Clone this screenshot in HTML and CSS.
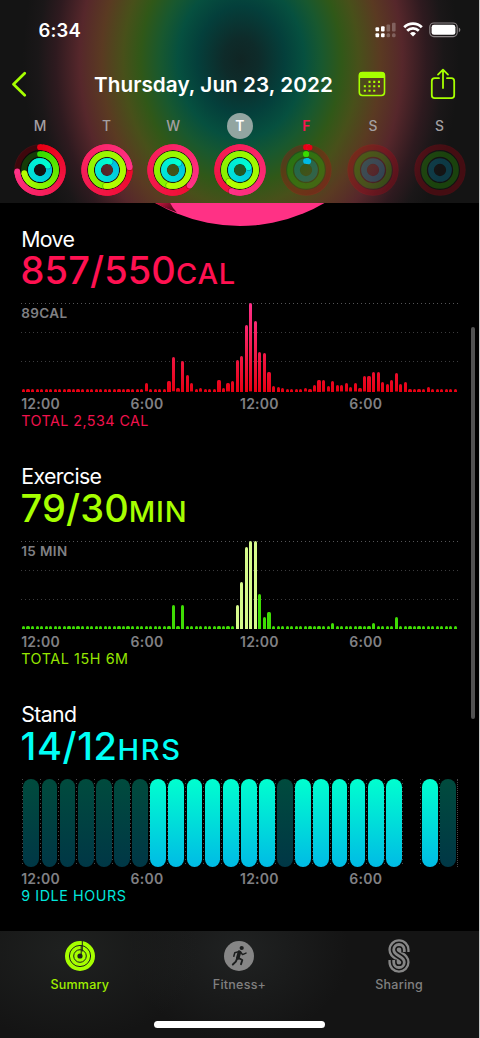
FILE: index.html
```html
<!DOCTYPE html>
<html lang="en">
<head>
    <meta charset="UTF-8">
    <meta name="viewport" content="width=device-width, initial-scale=1.0">
    <title>Activity</title>
    <link rel="stylesheet" href="styles.css">
</head>
<body>
    <div class="phone">
        <header class="header">
            <div class="status-bar">
                <span class="time">6:34</span>
                <svg class="signal" width="22" height="16" viewBox="0 0 22 16" fill="#fff">
                    <rect x="0.5" y="5.3" width="3.6" height="4" rx="1"/>
                    <rect x="6" y="4.2" width="3.6" height="5.2" rx="1"/>
                    <rect x="11.5" y="2.5" width="3.6" height="7" rx="1" opacity=".25"/>
                    <rect x="17" y="0.7" width="3.6" height="8.8" rx="1" opacity=".25"/>
                    <rect x="0.5" y="11.3" width="3.6" height="4" rx="1"/>
                    <rect x="6" y="11.3" width="3.6" height="4" rx="1"/>
                    <rect x="11.5" y="11.3" width="3.6" height="4" rx="1.5" opacity=".25"/>
                    <rect x="17" y="11.3" width="3.6" height="4" rx="1.5" opacity=".25"/>
                </svg>
                <svg class="wifi" width="20" height="15" viewBox="0 0 20 15" fill="none" stroke="#fff" stroke-width="2.8">
                    <path d="M1.2 5.2a12.6 12.6 0 0 1 17.6 0"/>
                    <path d="M4.2 8.8a8.2 8.2 0 0 1 11.6 0"/>
                    <path d="M10 14.6l-3-3.1a4.3 4.3 0 0 1 6 0z" fill="#fff" stroke="none"/>
                </svg>
                <svg class="battery" width="32" height="16" viewBox="0 0 32 16">
                    <rect x="0.8" y="1" width="27.4" height="13.6" rx="4" fill="none" stroke="#8c8587" stroke-width="1.1"/>
                    <rect x="2.6" y="2.8" width="23.8" height="10" rx="2.4" fill="#fff"/>
                    <path d="M29.8 5.4q1.6.8 1.6 2.4t-1.6 2.4z" fill="#8c8587"/>
                </svg>
            </div>
            <div class="nav-bar">
                <svg class="back" width="16" height="26" viewBox="0 0 16 26" fill="none" stroke="#a6ff00" stroke-width="2.7" stroke-linecap="round" stroke-linejoin="round">
                    <path d="M13.7 2.3L2.5 13.3l11.2 11"/>
                </svg>
                <h1 class="title">Thursday, Jun 23, 2022</h1>
                <svg class="calendar" width="28" height="26" viewBox="0 0 28 26" fill="#a6ff00">
                    <rect x="1.3" y="1.5" width="25.2" height="23" rx="3.2" fill="none" stroke="#a6ff00" stroke-width="1.6"/>
                    <path d="M1 7V4.2Q1 1 4.2 1h19.4Q26.8 1 26.8 4.2V7z"/>
                    <g fill="none" stroke="#a6ff00" stroke-width="2.1" stroke-dasharray="2.1 2.6">
                        <path d="M10.5 10.9h11.6"/>
                        <path d="M5.8 15.3h16.3"/>
                        <path d="M5.800 19.700h11.500"/>
                    </g>
                </svg>
                <svg class="share" width="26" height="32" viewBox="0 0 26 32" fill="none" stroke="#a6ff00" stroke-width="1.8" stroke-linecap="round" stroke-linejoin="round">
                    <path d="M9 10.2H4.7Q1.8 10.2 1.8 13.1V27.3Q1.8 30.2 4.7 30.2H21.3Q24.2 30.2 24.2 27.3V13.1Q24.2 10.2 21.3 10.2H17"/>
                    <path d="M13 20V1.7M8 6.6l5-5 5 5"/>
                </svg>
            </div>
            <div class="week" id="week"></div>
        </header>

        <svg class="big-ring" width="479" height="25" viewBox="0 202.5 479 25">
            <defs>
                <linearGradient id="ring-tail" x1="0" x2="1" y1="0" y2="0.5">
                    <stop offset="0" stop-color="#dc1844"/>
                    <stop offset="1" stop-color="#4d0719"/>
                </linearGradient>
            </defs>
            <circle cx="240" cy="59" r="166.5" fill="#ff3185"/>
            <path d="M154 202h16q2 5 7 10-12-4-23-10z" fill="url(#ring-tail)"/>
        </svg>

        <main class="content">
            <section class="metric move">
                <h2>Move</h2>
                <div class="value">857/550<span>CAL</span></div>
                <div class="chart">
                    <div class="scale">89CAL</div>
                    <div class="bars" id="move-bars"></div>
                </div>
                <div class="axis"><span>12:00</span><span>6:00</span><span>12:00</span><span>6:00</span></div>
                <div class="total">TOTAL 2,534 CAL</div>
            </section>

            <section class="metric exercise">
                <h2>Exercise</h2>
                <div class="value">79/30<span>MIN</span></div>
                <div class="chart">
                    <div class="scale">15 MIN</div>
                    <div class="bars" id="exercise-bars"></div>
                </div>
                <div class="axis"><span>12:00</span><span>6:00</span><span>12:00</span><span>6:00</span></div>
                <div class="total">TOTAL 15H 6M</div>
            </section>

            <section class="metric stand">
                <h2>Stand</h2>
                <div class="value">14/12<span>HRS</span></div>
                <div class="hours" id="stand-hours"></div>
                <div class="axis"><span>12:00</span><span>6:00</span><span>12:00</span><span>6:00</span></div>
                <div class="total">9 IDLE HOURS</div>
            </section>
        </main>

        <div class="scrollbar"></div>

        <footer class="tab-bar">
            <div class="tabs">
                <div class="tab active">
                    <svg width="34" height="34" viewBox="-17 -17 34 34" fill="none">
                        <circle r="8.8" stroke="#a6ff00" stroke-width="12.4"/>
                        <circle r="10.6" stroke="#1c1e1d" stroke-width="1"/>
                        <circle r="6.3" stroke="#1c1e1d" stroke-width="1"/>
                        <path d="M2.3-15V-4.5M1.2-11V-1" stroke="#1c1e1d" stroke-width="1"/>
                    </svg>
                    <span>Summary</span>
                </div>
                <div class="tab">
                    <svg width="34" height="34" viewBox="-17 -17 34 34" fill="none" stroke="#1c1e1e" stroke-linecap="round" stroke-linejoin="round">
                        <circle r="15" fill="#868686" stroke="none"/>
                        <circle cx="2.7" cy="-8" r="2.1" fill="#1c1e1e" stroke="none"/>
                        <path d="M.4-3.8L-1.2 2" stroke-width="3.6"/>
                        <path d="M-.4-4.4L-4.2-3.2-5.2.2M1.4-4.2L3.5-1.4 7-2.9" stroke-width="1.5"/>
                        <path d="M-.8 1.8L3.3 4 2 8.2M-1.7 2.2L-3.2 5.6-6.2 8.5" stroke-width="1.9"/>
                    </svg>
                    <span>Fitness+</span>
                </div>
                <div class="tab">
                    <svg width="22" height="34" viewBox="0 0 22 34" fill="none">
                        <path class="s-outer" d="M16.3 13V10.8A5.3 5.3 0 0 0 5.7 10.8C5.7 17.5 16.3 16.5 16.3 23.2A5.3 5.3 0 0 1 5.7 23.2V21"/>
                        <path class="s-gap" d="M16.3 13.5V10.8A5.3 5.3 0 0 0 5.7 10.8C5.7 17.5 16.3 16.5 16.3 23.2A5.3 5.3 0 0 1 5.7 23.2V20.5"/>
                        <path class="s-inner" d="M16.3 13V10.8A5.3 5.3 0 0 0 5.7 10.8C5.7 17.5 16.3 16.5 16.3 23.2A5.3 5.3 0 0 1 5.7 23.2V21"/>
                    </svg>
                    <span>Sharing</span>
                </div>
            </div>
            <div class="home-indicator"></div>
        </footer>
    </div>
    <script src="script.js"></script>
</body>
</html>
```
FILE: styles.css
```css
* {
    box-sizing: border-box;
}
body {
    margin: 0;
    background: #c9c9c9;
    font-family: Inter, "Liberation Sans", sans-serif;
    color: #fff;
}
.phone {
    position: relative;
    display: flex;
    flex-direction: column;
    width: 479px;
    height: 1038px;
    background: #000;
    overflow: hidden;
}

/* header */
.header {
    flex: none;
    height: 202.5px;
    background: radial-gradient(ellipse 218px 270px at 241px 60px,
        #102524 0%, #0e2b2a 8%, #043f3b 20%, #06503f 29%, #18582f 37%,
        #305818 46%, #48501a 54%, #5a3a22 64%, #56272b 74%, #2e1a1f 85%, #1a1718 93%, #141414 100%);
}
.status-bar {
    display: flex;
    align-items: center;
    height: 59px;
    padding-left: 38.5px;
}
.time {
    width: 336.5px;
    font-size: 18.5px;
    font-weight: 600;
    letter-spacing: 0.15px;
}
.signal {
    width: 22px;
}
.wifi {
    margin-left: 6px;
}
.battery {
    margin-left: 6px;
}
.nav-bar {
    display: flex;
    align-items: center;
    height: 50px;
    padding-left: 10.5px;
}
.title {
    width: 256px;
    margin: 0 0 0 67.5px;
    font-size: 20.7px;
    font-weight: 600;
    letter-spacing: 0.06px;
    white-space: nowrap;
}
.calendar {
    margin-left: 8px;
}
.share {
    margin-left: 44px;
}
.week {
    display: grid;
    grid-template-columns: repeat(7, 66.6px);
    padding: 4.3px 0 0 6.7px;
}
.day {
    display: flex;
    flex-direction: column;
    align-items: center;
}
.letter {
    width: 26px;
    height: 26px;
    border-radius: 50%;
    line-height: 26px;
    text-align: center;
    font-size: 13.8px;
    font-weight: 500;
    color: #a39fa1;
}
.selected .letter {
    background: #92a5a1;
    color: #fff;
    font-weight: 600;
}
.today .letter {
    color: #fa1450;
    font-weight: 600;
}
.rings {
    margin-top: 4px;
}

.big-ring {
    flex: none;
    display: block;
}

/* metrics */
.content {
    flex: none;
    display: flex;
    flex-direction: column;
    gap: 35.3px;
    height: 703.5px;
    padding: 0.3px 0 0 21.2px;
}
.metric h2 {
    margin: 0;
    height: 22.4px;
    line-height: 22.4px;
    font-size: 21.3px;
    font-weight: 400;
    letter-spacing: -0.6px;
}
.value {
    height: 40px;
    line-height: 40px;
    margin: 0 0 13.2px -0.6px;
    font-size: 38px;
    font-weight: 500;
    letter-spacing: 0.1px;
    color: #ff1151;
    white-space: nowrap;
}
.value span {
    font-size: 29px;
    letter-spacing: 0.8px;
}
.chart {
    position: relative;
    width: 436.8px;
    height: 88.4px;
    background:
        repeating-linear-gradient(90deg, transparent 0 1.5px, #000 1.5px 4px) 0 0 / 100% 100%,
        linear-gradient(#555557, #555557) 0 0 / 100% 1px no-repeat,
        linear-gradient(#3c3c3e, #3c3c3e) 0 29px / 100% 1px no-repeat,
        linear-gradient(#3c3c3e, #3c3c3e) 0 58px / 100% 1px no-repeat;
}
.scale {
    position: absolute;
    top: 1.5px;
    left: 0;
    font-size: 13.5px;
    line-height: 17px;
    font-weight: 600;
    letter-spacing: 0.4px;
    color: #808084;
}
.bars {
    display: flex;
    align-items: flex-end;
    height: 100%;
}
.bar {
    flex: 1;
    height: 3px;
    margin: 0 0.7px;
    border-radius: 1.5px 1.5px 0 0;
}
.move .bar {
    background: linear-gradient(#ff308a, #f01a4a 55%, #e80012) 0 100% / 100% 88.4px no-repeat;
}
.exercise .bar {
    background: #3fdd04;
}
.exercise .bar.workout {
    background: #d6fa8c;
}
.hours {
    display: grid;
    grid-template-columns: repeat(24, 18.14px);
    width: 436.8px;
    height: 88.4px;
    padding-left: 0.5px;
}
.hour {
    height: 100%;
    padding: 0 0.7px 0 1.7px;
    background: repeating-linear-gradient(#4a4a4c 0 1.5px, transparent 1.5px 4px) 0 0 / 1.2px 100% no-repeat;
}
.hour:last-child {
    width: 19.2px;
    border-right: 1px dotted #4a4a4c;
}
.pill {
    height: 100%;
    border-radius: 8px;
}
.stood {
    background: linear-gradient(#00ffcf, #00bbe5);
}
.idle {
    background: linear-gradient(#004b3d, #003746);
}
.axis {
    display: grid;
    grid-template-columns: repeat(4, 109.4px);
    height: 17px;
    margin-top: 3.4px;
    line-height: 17px;
    font-size: 14px;
    font-weight: 600;
    letter-spacing: 0.25px;
    color: #808084;
}
.total {
    height: 18px;
    line-height: 18px;
    font-size: 14.3px;
    letter-spacing: 0.46px;
    color: #f0124d;
}
.exercise .value {
    color: #a6ff00;
}
.exercise .total {
    color: #96e600;
    letter-spacing: 0.6px;
}
.stand .value {
    color: #00fff6;
    letter-spacing: 0.6px;
}
.stand .total {
    color: #00e6dc;
    letter-spacing: 0.58px;
}
.stand .value span {
    letter-spacing: 1.6px;
}

.scrollbar {
    position: absolute;
    top: 327px;
    left: 471.3px;
    width: 4px;
    height: 391.5px;
    border-radius: 2px;
    background: #525252;
}

/* tab bar */
.tab-bar {
    flex: none;
    height: 107px;
    padding-top: 7.5px;
    background:
        radial-gradient(ellipse 130px 90px at 70px 20px, #1f2120, transparent),
        radial-gradient(ellipse 110px 90px at 239px 20px, #202222, transparent),
        #141414;
}
.tabs {
    display: grid;
    grid-template-columns: repeat(3, 1fr);
}
.tab {
    display: flex;
    flex-direction: column;
    align-items: center;
    font-size: 12.5px;
    font-weight: 500;
    letter-spacing: 0.25px;
    color: #808080;
}
.tab span {
    margin-top: 4.5px;
    line-height: 16px;
}
.tab.active {
    color: #a0f000;
}
.s-outer {
    stroke: #868686;
    stroke-width: 10.6;
}
.s-gap {
    stroke: #161616;
    stroke-width: 6;
}
.s-inner {
    stroke: #868686;
    stroke-width: 2.8;
}
.home-indicator {
    width: 171px;
    height: 6.6px;
    margin: 28px auto 0;
    border-radius: 4px;
    background: #fff;
}
```
FILE: script.js
```javascript
const MOVE = { start: [232, 0, 20], end: [255, 50, 135] };
const EXERCISE = { start: [56, 220, 0], end: [182, 255, 0] };
const STAND = { start: [0, 186, 228], end: [0, 255, 208] };

// progress of each ring, 1 = one full lap
const days = [
    { letter: 'M', move: 0.74, exercise: 0.72, stand: 1.17 },
    { letter: 'T', move: 1.23, exercise: 2.51, stand: 1.05 },
    { letter: 'W', move: 1.37, exercise: 2.54, stand: 1.11 },
    { letter: 'T', move: 1.56, exercise: 2.62, stand: 1.2, cls: 'selected' },
    { letter: 'F', move: 0.025, exercise: 0.002, stand: 0.04, cls: 'today' },
    { letter: 'S', move: 0, exercise: 0, stand: 0 },
    { letter: 'S', move: 0, exercise: 0, stand: 0 }
];

function mix(ring, t) {
    return 'rgb(' + ring.start.map((c, i) => Math.round(c + (ring.end[i] - c) * t)).join(',') + ')';
}

function point(r, lap) {
    const a = lap * Math.PI * 2;
    return [(r * Math.sin(a)).toFixed(2), (-r * Math.cos(a)).toFixed(2)];
}

function drawRing(r, progress, ring) {
    let svg = `<circle r="${r}" fill="none" stroke="${mix(ring, 0)}" stroke-opacity=".24" stroke-width="5.7"/>`;
    if (!progress) return svg;
    const from = Math.max(0, progress - 1);
    const steps = 40;
    const size = (progress - from) / steps;
    if (from === 0) {
        const [x, y] = point(r, 0);
        svg += `<circle cx="${x}" cy="${y}" r="2.85" fill="${mix(ring, 0)}"/>`;
    }
    for (let i = 0; i < steps; i++) {
        const a = from + i * size;
        // run each piece under the next one so no seams show
        const [x1, y1] = point(r, a);
        const [x2, y2] = point(r, Math.min(progress, a + size * 2));
        svg += `<path d="M${x1} ${y1}A${r} ${r} 0 0 1 ${x2} ${y2}" fill="none" stroke="${mix(ring, a / progress)}" stroke-width="5.7"/>`;
    }
    const [x, y] = point(r, progress);
    if (from > 0) {
        const [sx, sy] = point(r, progress + 0.13 / r);
        svg += `<circle cx="${sx}" cy="${sy}" r="2.85" fill="#000" opacity=".22"/>`;
    }
    svg += `<circle cx="${x}" cy="${y}" r="2.85" fill="${mix(ring, progress < 0.1 ? 0 : 1)}"/>`;
    return svg;
}

document.getElementById('week').innerHTML = days.map(day => `
    <div class="day ${day.cls || ''}">
        <div class="letter">${day.letter}</div>
        <svg class="rings" width="54" height="54" viewBox="-27 -27 54 54">
            <circle r="15.5" fill="none" stroke="#000" stroke-width="19" opacity="${day.exercise > 0.1 ? 0.5 : 0.08}"/>
            ${drawRing(22.8, day.move, MOVE)}
            ${drawRing(16, day.exercise, EXERCISE)}
            ${drawRing(9, day.stand, STAND)}
        </svg>
    </div>`).join('');

// bar heights for each quarter of an hour, the rest stay at the minimum
const moveBars = {
    27: 8.3, 32: 11, 33: 34.3, 34: 3.7, 35: 31, 36: 17, 37: 8.5, 39: 3.7, 43: 12, 44: 4, 45: 8.5,
    46: 11, 47: 32, 48: 36, 49: 67, 50: 88.4, 51: 71, 52: 40, 53: 39, 54: 20, 55: 6, 56: 5, 57: 4,
    62: 3.5, 64: 6.5, 65: 12, 66: 11.8, 67: 5.5, 68: 11, 69: 6.5, 70: 6.5, 71: 8.5, 72: 4.5, 73: 8.5,
    74: 3.7, 75: 15.5, 76: 16, 77: 20, 78: 19.5, 79: 10, 80: 8, 81: 12, 82: 18.5, 83: 8, 84: 10, 89: 5
};
const exerciseBars = {
    33: 24, 35: 24, 47: 24, 48: 47, 49: 82, 50: 88.4, 51: 88.4, 52: 35, 53: 12, 54: 17.5, 68: 6, 77: 6, 82: 12
};

function drawBars(id, heights, workout) {
    let html = '';
    for (let i = 0; i < 96; i++) {
        const cls = workout && i >= workout[0] && i <= workout[1] ? 'bar workout' : 'bar';
        html += `<div class="${cls}" style="height:${heights[i] || 3}px"></div>`;
    }
    document.getElementById(id).innerHTML = html;
}
drawBars('move-bars', moveBars);
drawBars('exercise-bars', exerciseBars, [47, 51]);

// s = stood, i = idle, - = no data
document.getElementById('stand-hours').innerHTML = [...'iiiiiiisssssssissssss-si'].map(h => {
    const cls = h === 's' ? 'pill stood' : h === 'i' ? 'pill idle' : 'pill';
    return `<div class="hour"><div class="${cls}"></div></div>`;
}).join('');
```
